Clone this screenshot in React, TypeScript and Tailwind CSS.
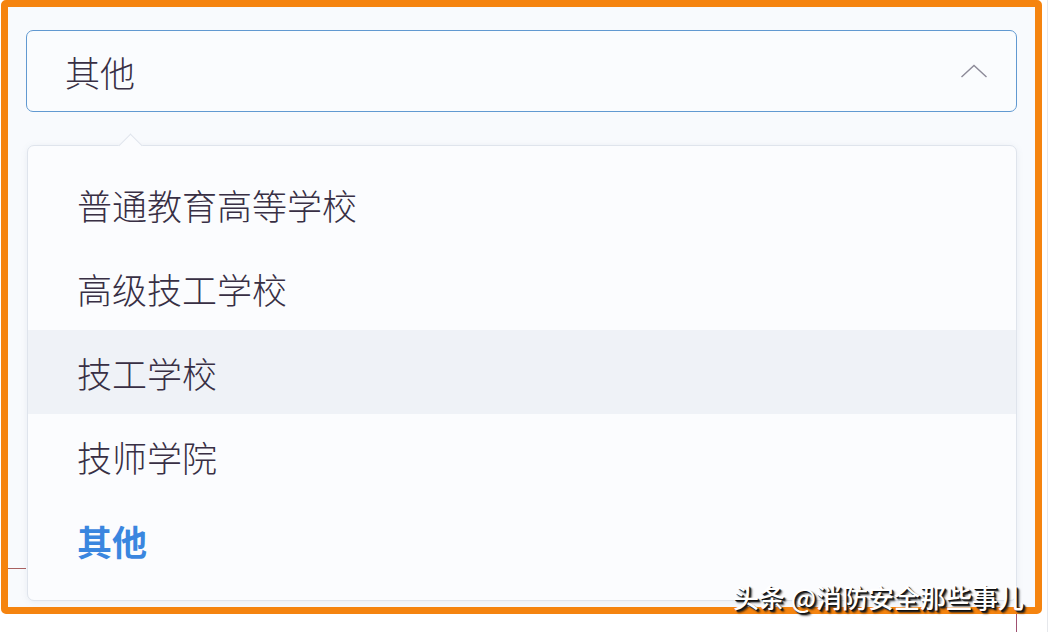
import React from "react"

const items = ["普通教育高等学校", "高级技工学校", "技工学校", "技师学院", "其他"]

export default function App() {
  const selected = "其他"
  const hovered = "技工学校"

  return (
    <div
      className="relative w-[1050px] h-[632px] bg-white overflow-hidden"
      style={{ fontFamily: '"Noto Sans CJK SC", "Noto Sans", sans-serif' }}
    >
      <div className="ml-[1px] w-[1041px] h-[614px] border-[7px] border-[#f5840f] rounded-[5px] bg-[#f8fafd] pl-[18px] pt-[23px]">
        {/* select */}
        <div className="flex items-center justify-between w-[991px] h-[82px] border-[1.5px] border-[#6199d1] rounded-[7px] bg-[#fafcfe] pl-[38px] pr-[28px]">
          <span className="text-[35px] font-light text-[#382f44] leading-none">{selected}</span>
          <svg width="28" height="16" viewBox="0 0 28 16" fill="none">
            <path d="M1.5 14 L14 2.5 L26.5 14" stroke="#8c8a98" strokeWidth="1.4" />
          </svg>
        </div>

        {/* dropdown */}
        <div className="relative mt-[33px] ml-[1px] w-[990px] h-[456px] border border-[#dfe4ec] rounded-[7px] bg-[#fbfcfe] pt-[16px] shadow-[0_1px_6px_rgba(120,140,170,0.12)]">
          <div className="absolute -top-[9px] left-[94px] w-[17px] h-[17px] rotate-45 bg-[#fbfcfe] border-l border-t border-[#dfe4ec]" />
          {items.map((it) => (
            <div
              key={it}
              className={
                "flex items-center h-[84px] pl-[49px] " +
                (it === hovered ? "bg-[#eff2f7]" : "")
              }
            >
              <span
                className={
                  "text-[35px] leading-none " +
                  (it === selected ? "font-bold text-[#3a86df]" : "font-light text-[#382f44]")
                }
              >
                {it}
              </span>
            </div>
          ))}
        </div>
      </div>

      {/* stray lines from the original page */}
      <div className="absolute left-[8px] top-[568px] w-[18px] h-px bg-[#a86060]" />
      <div className="absolute left-[1016px] top-[614px] w-px h-[18px] bg-[#a05070]" />
      <div className="absolute left-[1047px] top-0 w-px h-[632px] bg-[#e6e8ec]" />

      {/* watermark */}
      <div
        className="absolute left-[733px] top-[584px] text-[26px] font-medium leading-none text-white whitespace-nowrap"
        style={{ textShadow: "1px 1px 0 #111, 2px 2px 1px #222, 3px 3px 2px rgba(0,0,0,0.5)" }}
      >
        头条 @消防安全那些事儿
      </div>
    </div>
  )
}
